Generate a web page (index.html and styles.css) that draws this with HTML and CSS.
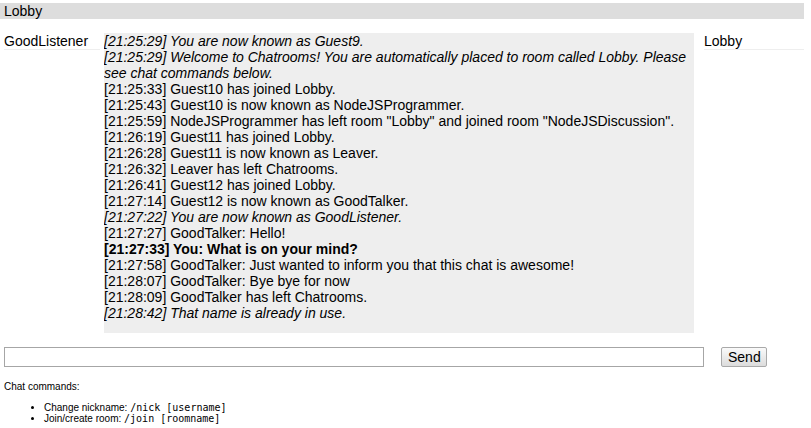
FILE: index.html
```html
<!DOCTYPE html>
<html>
<head>
<meta charset="utf-8">
<title>Chat</title>
<link rel="stylesheet" href="styles.css">
</head>
<body>
<div class="content">
  <div class="room">Lobby</div>
  <div class="main">
    <div class="nick">GoodListener</div>
    <div class="messages">
      <div><i>[21:25:29] You are now known as Guest9.</i></div>
      <div><i>[21:25:29] Welcome to Chatrooms! You are automatically placed to room called Lobby. Please see chat commands below.</i></div>
      <div>[21:25:33] Guest10 has joined Lobby.</div>
      <div>[21:25:43] Guest10 is now known as NodeJSProgrammer.</div>
      <div>[21:25:59] NodeJSProgrammer has left room "Lobby" and joined room "NodeJSDiscussion".</div>
      <div>[21:26:19] Guest11 has joined Lobby.</div>
      <div>[21:26:28] Guest11 is now known as Leaver.</div>
      <div>[21:26:32] Leaver has left Chatrooms.</div>
      <div>[21:26:41] Guest12 has joined Lobby.</div>
      <div>[21:27:14] Guest12 is now known as GoodTalker.</div>
      <div><i>[21:27:22] You are now known as GoodListener.</i></div>
      <div>[21:27:27] GoodTalker: Hello!</div>
      <div><b>[21:27:33] You: What is on your mind?</b></div>
      <div>[21:27:58] GoodTalker: Just wanted to inform you that this chat is awesome!</div>
      <div>[21:28:07] GoodTalker: Bye bye for now</div>
      <div>[21:28:09] GoodTalker has left Chatrooms.</div>
      <div><i>[21:28:42] That name is already in use.</i></div>
    </div>
    <div class="room-list">
      <div class="room-item">Lobby</div>
    </div>
  </div>
  <form class="send-form">
    <input class="send-message" type="text">
    <button class="send-button" type="button">Send</button>
  </form>
  <div class="help">
    Chat commands:
    <ul class="help-list">
      <li>Change nickname: <code>/nick [username]</code></li>
      <li>Join/create room: <code>/join [roomname]</code></li>
    </ul>
  </div>
</div>
</body>
</html>
```
FILE: styles.css
```css
html, body {
  margin: 0;
  padding: 0;
  background: #fff;
}
body {
  font: 14px "Liberation Sans", Arial, sans-serif;
  color: #000;
}
.content {
  width: 804px;
  padding-top: 3px;
}
.room {
  background-color: #ddd;
  padding-left: 4px;
  height: 16px;
  line-height: 16px;
  margin-bottom: 14px;
}
.main {
  display: flex;
  align-items: flex-start;
  padding-left: 4px;
}
.nick {
  width: 96px;
  margin-right: 4px;
  line-height: 16px;
  border-bottom: 1px solid #eee;
}
.messages {
  width: 590px;
  height: 300px;
  overflow: auto;
  background-color: #eee;
  margin-right: 10px;
  line-height: 16px;
}
.room-list {
  width: 100px;
  height: 300px;
}
.room-item {
  line-height: 16px;
  border-bottom: 1px solid #eee;
}
.send-form {
  display: flex;
  align-items: center;
  margin: 14px 0 14px 4px;
  height: 20px;
}
.send-message {
  box-sizing: border-box;
  width: 700px;
  height: 20px;
  margin: 0 17px 0 0;
  border: 1px solid #a6a6a6;
  padding: 1px 2px;
  font: 13.33px "Liberation Sans", Arial, sans-serif;
  background: #fff;
}
.send-button {
  box-sizing: border-box;
  height: 20px;
  width: 46px;
  padding: 0 6px;
  margin: 0;
  font: 14px "Liberation Sans", Arial, sans-serif;
  color: #000;
  border: 1px solid #a9a9a9;
  border-radius: 2px;
  background: linear-gradient(#fafafa, #dcdcdc);
  line-height: 16px;
}
.help {
  font: 10px "Liberation Sans", Arial, sans-serif;
  padding-left: 4px;
}
.help-list {
  margin: 10px 0 0 0;
  padding-left: 40px;
}
.help-list code {
  font: 10px "DejaVu Sans Mono", monospace;
}
```
